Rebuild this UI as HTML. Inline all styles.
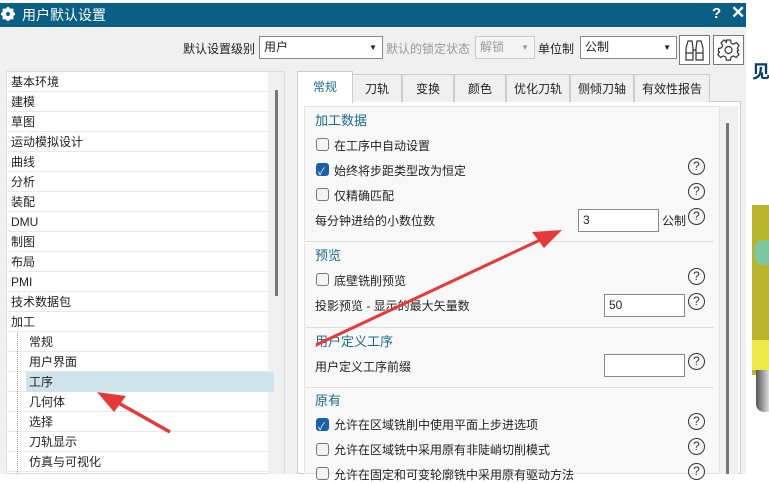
<!DOCTYPE html>
<html><head><meta charset="utf-8"><style>
*{margin:0;padding:0;box-sizing:border-box}
body{width:769px;height:474px;overflow:hidden;background:#fff;font-family:"Liberation Sans","Noto Sans CJK SC",sans-serif;font-size:12px;color:#222;position:relative}
.a{position:absolute}
.row{position:absolute;left:7px;width:261px;height:20px;line-height:20px;padding-left:4px;border-bottom:1px solid #e8e8e8}
.cb{position:absolute;width:13px;height:13px;border:1px solid #777;border-radius:3px;background:#f4f4f4}
.cb.on{background:#1a5fa8;border-color:#1a5fa8}
.q{position:absolute;width:17px;height:17px;border:1.3px solid #333;border-radius:50%;font-size:12px;line-height:14px;text-align:center;color:#333}
.t{position:absolute;white-space:nowrap}
.h{color:#1b6b8a;font-size:13px}
.in{position:absolute;border:1px solid #888;background:#fff;height:23px;line-height:21px;padding-left:4px}
.tab{position:absolute;top:74px;height:28px;line-height:28px;text-align:center;border:1px solid #ccc;border-bottom:none;background:#f0f0f0;font-size:12px}
</style></head><body>
<div class="a" style="left:0;top:0;width:769px;height:474px;background:#f0f0f0"></div>
<div class="a" style="left:746px;top:0;width:23px;height:474px;background:#fff"></div>
<div class="a" style="left:0;top:0;width:746px;height:3px;background:#fff"></div>
<div class="t" style="left:752px;top:58px;font-size:18px;font-weight:bold;color:#0d3d6b">见</div>
<div class="a" style="left:752px;top:205px;width:17px;height:170px;background:#b9b52a"></div>
<div class="a" style="left:754px;top:240px;width:15px;height:25px;background:#7cc79f;border-radius:50% 0 0 50%"></div>
<div class="a" style="left:752px;top:340px;width:17px;height:30px;background:#efe84a"></div>
<div class="a" style="left:756px;top:370px;width:13px;height:42px;background:linear-gradient(90deg,#555,#ddd);border-radius:0 0 0 8px"></div>
<!-- title -->
<div class="a" style="left:0;top:3px;width:746px;height:24px;background:#0b5f84"></div>
<svg class="a" style="left:1px;top:7px" width="14" height="14" viewBox="0 0 14 14"><circle cx="7" cy="7" r="4.5" fill="none" stroke="#fff" stroke-width="3"/><g stroke="#fff" stroke-width="2.5"><line x1="7" y1="0" x2="7" y2="14"/><line x1="0" y1="7" x2="14" y2="7"/><line x1="2" y1="2" x2="12" y2="12"/><line x1="12" y1="2" x2="2" y2="12"/></g><circle cx="7" cy="7" r="2" fill="#0b5f84"/></svg>
<div class="t" style="left:22px;top:5px;color:#fff;font-size:14px">用户默认设置</div>
<div class="t" style="left:712px;top:5px;color:#fff;font-size:15px;font-weight:bold">?</div>
<div class="t" style="left:731px;top:3px;color:#fff;font-size:17px;font-weight:bold">✕</div>
<!-- toolbar -->
<div class="t" style="left:183px;top:40px">默认设置级别</div>
<div class="in" style="left:259px;top:36px;width:124px">用户<span style="position:absolute;right:5px;font-size:8px">▼</span></div>
<div class="t" style="left:386px;top:40px;color:#999">默认的锁定状态</div>
<div class="in" style="left:475px;top:36px;width:60px;color:#999;border-color:#ccc;background:#f4f4f4">解锁<span style="position:absolute;right:5px;font-size:8px">▼</span></div>
<div class="t" style="left:538px;top:40px">单位制</div>
<div class="in" style="left:580px;top:36px;width:97px">公制<span style="position:absolute;right:5px;font-size:8px">▼</span></div>
<div class="a" style="left:679px;top:35px;width:31px;height:30px;border:1px solid #777;background:#fff"></div>
<svg class="a" style="left:682px;top:38px" width="25" height="24" viewBox="0 0 25 24" fill="none" stroke="#333" stroke-width="1.2"><path d="M4 22V10L6 3H10L11 10V22Z M14 22V10L15 3H19L21 10V22Z M11 12H14 M4 15H11 M14 15H21"/></svg>
<div class="a" style="left:713px;top:35px;width:31px;height:30px;border:1px solid #777;background:#fff"></div>
<svg class="a" style="left:716px;top:38px" width="25" height="24" viewBox="0 0 24 24" fill="none" stroke="#333" stroke-width="1.2"><path d="M10 2h4l.6 3 2.4 1.2 2.7-1.6 2.8 2.8-1.6 2.7L22 12.5v0l-1 .1-.2 1.4 1.6 2.7-2.8 2.8-2.7-1.6-2.4 1.2-.6 3h-4l-.6-3-2.4-1.2-2.7 1.6-2.8-2.8 1.6-2.7L2 13.5v-3l3-.6 1.2-2.4-1.6-2.7 2.8-2.8 2.7 1.6L9.4 5z"/><circle cx="12" cy="12" r="3.5"/></svg>
<!-- tree -->
<div class="a" style="left:6px;top:71px;width:279px;height:403px;background:#fff;border:1px solid #ddd"></div>
<div class="a" style="left:268px;top:72px;width:16px;height:402px;background:#f0f0f0"></div>
<div class="a" style="left:275px;top:90px;width:3px;height:206px;background:#777"></div>
<div class="row" style="top:72px">基本环境</div>
<div class="row" style="top:92px">建模</div>
<div class="row" style="top:112px">草图</div>
<div class="row" style="top:132px">运动模拟设计</div>
<div class="row" style="top:152px">曲线</div>
<div class="row" style="top:172px">分析</div>
<div class="row" style="top:192px">装配</div>
<div class="row" style="top:212px">DMU</div>
<div class="row" style="top:232px">制图</div>
<div class="row" style="top:252px">布局</div>
<div class="row" style="top:272px">PMI</div>
<div class="row" style="top:292px">技术数据包</div>
<div class="row" style="top:312px">加工</div>
<div class="row" style="top:332px;padding-left:22px">常规</div>
<div class="row" style="top:352px;padding-left:22px">用户界面</div>
<div class="row" style="top:372px;padding-left:22px"><span class="a" style="left:19px;top:0;width:248px;height:20px;background:#cfe3ea"></span><span style="position:relative">工序</span></div>
<div class="row" style="top:392px;padding-left:22px">几何体</div>
<div class="row" style="top:412px;padding-left:22px">选择</div>
<div class="row" style="top:432px;padding-left:22px">刀轨显示</div>
<div class="row" style="top:452px;padding-left:22px">仿真与可视化</div>
<div class="a" style="left:17px;top:333px;height:141px;border-left:1px dotted #999"></div>
<!-- tabs -->
<div class="a" style="left:297px;top:101px;width:444px;height:373px;background:#fff;border:1px solid #ccc"></div>
<div class="tab" style="left:352px;width:50px">刀轨</div>
<div class="tab" style="left:402px;width:52px">变换</div>
<div class="tab" style="left:454px;width:52px">颜色</div>
<div class="tab" style="left:506px;width:64px">优化刀轨</div>
<div class="tab" style="left:570px;width:64px">侧倾刀轴</div>
<div class="tab" style="left:634px;width:76px">有效性报告</div>
<div class="tab" style="left:297px;top:71px;width:56px;height:32px;line-height:30px;background:#fff;color:#1b6b8a">常规</div>
<div class="a" style="left:304px;top:106px;width:416px;height:368px;background:#f8f8f8;border:1px solid #e4e4e4"></div>
<div class="a" style="left:720px;top:106px;width:18px;height:368px;background:#f0f0f0"></div>
<div class="a" style="left:726px;top:123px;width:3px;height:351px;background:#777"></div>
<div class="t h" style="left:315px;top:110px">加工数据</div>
<div class="cb" style="left:316px;top:138px"></div><div class="t" style="left:334px;top:137px">在工序中自动设置</div>
<div class="cb on" style="left:316px;top:163px"><span style="color:#fff;font-size:10px;position:absolute;left:1px;top:-1px">✓</span></div><div class="t" style="left:334px;top:162px">始终将步距类型改为恒定</div>
<div class="cb" style="left:316px;top:188px"></div><div class="t" style="left:334px;top:187px">仅精确匹配</div>
<div class="t" style="left:315px;top:212px">每分钟进给的小数位数</div>
<div class="in" style="left:578px;top:209px;width:81px">3</div>
<div class="t" style="left:662px;top:212px">公制</div>
<div class="q" style="left:688px;top:158px">?</div><div class="q" style="left:688px;top:183px">?</div><div class="q" style="left:688px;top:208px">?</div>
<div class="a" style="left:306px;top:241px;width:408px;height:1px;background:#ddd"></div>
<div class="t h" style="left:315px;top:245px">预览</div>
<div class="cb" style="left:316px;top:273px"></div><div class="t" style="left:334px;top:272px">底壁铣削预览</div>
<div class="t" style="left:315px;top:297px">投影预览 - 显示的最大矢量数</div>
<div class="in" style="left:604px;top:294px;width:81px">50</div>
<div class="q" style="left:688px;top:268px">?</div><div class="q" style="left:688px;top:293px">?</div>
<div class="a" style="left:306px;top:327px;width:408px;height:1px;background:#ddd"></div>
<div class="t h" style="left:315px;top:331px">用户定义工序</div>
<div class="t" style="left:315px;top:358px">用户定义工序前缀</div>
<div class="in" style="left:604px;top:354px;width:81px"></div>
<div class="q" style="left:688px;top:353px">?</div>
<div class="a" style="left:306px;top:387px;width:408px;height:1px;background:#ddd"></div>
<div class="t h" style="left:315px;top:390px">原有</div>
<div class="cb on" style="left:316px;top:418px"><span style="color:#fff;font-size:10px;position:absolute;left:1px;top:-1px">✓</span></div><div class="t" style="left:334px;top:416px">允许在区域铣削中使用平面上步进选项</div>
<div class="cb" style="left:316px;top:443px"></div><div class="t" style="left:334px;top:441px">允许在区域铣中采用原有非陡峭切削模式</div>
<div class="cb" style="left:316px;top:467px"></div><div class="t" style="left:334px;top:466px">允许在固定和可变轮廓铣中采用原有驱动方法</div>
<div class="q" style="left:688px;top:413px">?</div><div class="q" style="left:688px;top:438px">?</div><div class="q" style="left:688px;top:463px">?</div>
<svg class="a" style="left:0;top:0" width="769" height="474">
<line x1="316" y1="345" x2="540" y2="240" stroke="#e63a3a" stroke-width="3"/>
<polygon points="562,230 532,232 544,248" fill="#e63a3a"/>
<line x1="170" y1="432" x2="115" y2="401" stroke="#e63a3a" stroke-width="3.5"/>
<polygon points="97,392 126,396 114,412" fill="#e63a3a"/>
</svg>
</body></html>
